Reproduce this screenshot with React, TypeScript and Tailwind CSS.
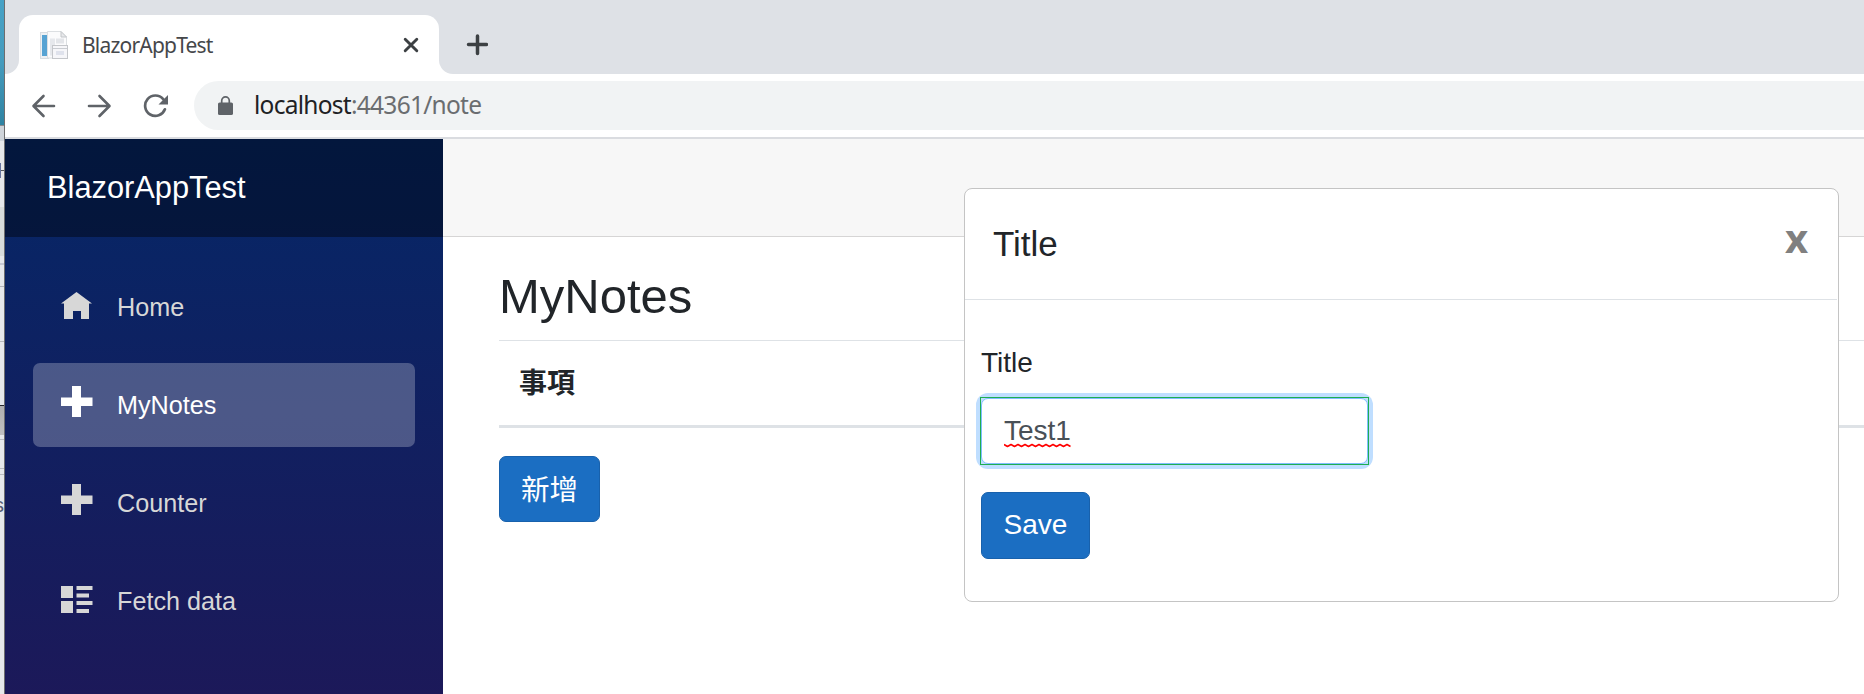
import React from "react";

function Favicon() {
  return (
    <svg width="28" height="28" viewBox="0 0 28 28" className="shrink-0">
      <rect x="0.5" y="1.5" width="8" height="26" fill="#eef1f4" stroke="#d9dde1" />
      <rect x="2" y="4" width="5" height="21" fill="#57a3d3" />
      <path d="M7.5 .5H21L26.500 6V27H7.500Z" fill="#fbfbfc" stroke="#dcdfe2" />
      <rect x="10" y="7.500" width="5" height="17" fill="#e6e8ec" />
      <rect x="16" y="7.500" width="8" height="5" fill="#e3e5e9" />
      <path d="M21 .5V6H26.500Z" fill="#e8e9eb" stroke="#c3c6ca" />
      <rect x="12.500" y="14.500" width="15" height="13" fill="#f6f6f9" stroke="#c4c6ca" />
      <path d="M13 17.500H27" stroke="#c9ccd1" />
      <rect x="16" y="20" width="8" height="4" fill="#dfe2ec" />
    </svg>
  );
}

function DesktopEdge() {
  return (
    <div className="flex h-full w-[5px] shrink-0 flex-col overflow-hidden border-r border-[#6d6d6e] bg-[#e6e8ea]">
      <div className="h-[125px] shrink-0 bg-linear-to-b from-[#47a2c6] via-[#459bbd] to-[#2f83a2]" />
      <div className="h-4 shrink-0 border-t border-[#888c90] bg-[#cfd4da]" />
      <div className="flex h-[59px] shrink-0 items-center">
        <div className="h-[15px] w-px bg-[#66749f]" />
        <div className="h-px w-[3px] bg-[#55585c]" />
      </div>
      <div className="mt-[7px] h-[49px] shrink-0 bg-[#d8dcdb]" />
      <div className="mt-[7px] h-[2px] shrink-0 bg-[#c6c9d2]" />
      <div className="mt-[21px] h-px shrink-0 bg-[#b3b5bb]" />
      <div className="mt-[54px] h-px shrink-0 bg-[#b8babc]" />
      <div className="mt-[63px] h-px shrink-0 bg-[#26272b]" />
      <div className="h-[29px] shrink-0 bg-linear-to-b from-[#b0b0b0] to-[#c0c0c0]" />
      <div className="mt-[4px] h-px shrink-0 bg-[#b9bcc0]" />
      <div className="mt-[28px] h-px shrink-0 bg-[#b9bcc0]" />
      <div className="mt-[5px] h-px shrink-0 bg-[#b9bcc0]" />
      <div className="mt-[16px] flex h-[28px] shrink-0 justify-end overflow-hidden text-[20px] leading-[28px] text-[#555b72]">s</div>
    </div>
  );
}

function TabStrip() {
  return (
    <div className="flex h-[74px] shrink-0 items-end bg-[#dee1e6]">
      <div className="h-[14px] w-[14px] bg-white">
        <div className="h-full w-full rounded-br-[14px] bg-[#dee1e6]" />
      </div>
      <div className="flex h-[59px] w-[420px] items-center rounded-t-[14px] bg-white pl-[21px] pr-[20px]">
        <Favicon />
        <span className="ml-[14px] flex-1 whitespace-nowrap font-['Noto_Sans',sans-serif] text-[21px] leading-7 tracking-[-0.8px] text-[#45474a]">
          BlazorAppTest
        </span>
        <svg width="16" height="16" viewBox="0 0 16 16">
          <path d="M2.200 2.200L13.800 13.800M13.800 2.200L2.200 13.800" stroke="#3c4043" strokeWidth="2.900" strokeLinecap="round" />
        </svg>
      </div>
      <div className="h-[14px] w-[14px] bg-white">
        <div className="h-full w-full rounded-bl-[14px] bg-[#dee1e6]" />
      </div>
      <svg width="22" height="22" viewBox="0 0 22 22" className="mb-[18px] ml-[13px]">
        <path d="M11.500 2V19.500M2.500 10.500H20.500" stroke="#3c4043" strokeWidth="3.500" strokeLinecap="round" />
      </svg>
    </div>
  );
}

function Toolbar() {
  return (
    <div className="flex h-[65px] shrink-0 items-center border-b-2 border-[#dadce0] pl-[26px]">
      <svg width="25" height="24" viewBox="0 0 25 24" fill="none" stroke="#5f6368" strokeWidth="2.600" strokeLinecap="round" strokeLinejoin="round">
        <path d="M23 12H3M12.500 2L2.500 12L12.500 22" />
      </svg>
      <svg width="25" height="24" viewBox="0 0 25 24" fill="none" stroke="#5f6368" strokeWidth="2.600" strokeLinecap="round" strokeLinejoin="round" className="ml-[31px]">
        <path d="M2 12H22M12.500 2L22.500 12L12.500 22" />
      </svg>
      <svg width="26" height="24" viewBox="0 0 26 24" fill="none" className="ml-[31px]">
        <path d="M20.200 5.200A10.200 10.200 0 1 0 21.900 15.300" stroke="#5f6368" strokeWidth="2.700" strokeLinecap="round" />
        <path d="M25 1V10.500H15.500Z" fill="#5f6368" />
      </svg>
      <div className="ml-[25px] flex h-[49px] flex-1 items-center rounded-l-full bg-[#f1f3f4] pl-6">
        <svg width="15" height="19" viewBox="0 0 15 19" fill="none">
          <rect x="0" y="6.500" width="15" height="12.500" rx="1.600" fill="#5f6368" />
          <path d="M3.700 7V4.700a3.800 3.800 0 0 1 7.600 0V7" stroke="#5f6368" strokeWidth="1.700" />
        </svg>
        <span className="-mt-px ml-[21px] font-['Noto_Sans',sans-serif] text-[24.5px] leading-[34px] tracking-[-0.73px] text-[#6a6d70]">
          <span className="text-[#202124]">localhost</span>:44361/note
        </span>
      </div>
    </div>
  );
}

const plus = <path d="M11 0H20V11.500H31.500V20H20V31H11V20H0V11.500H11Z" />;
const home = <path d="M15.500 4L0 15.500H3V31H12V23H20V31H28V15.500H31Z" />;
const list = (
  <path d="M0 4H12V16H0ZM0 19H12V31H0ZM15.500 4H31.500V8H15.500ZM15.500 11.500H28V15.500H15.500ZM15.500 19H31.500V23H15.500ZM15.500 27H28V31H15.500Z" />
);

const items = [
  { label: "Home", icon: home },
  { label: "MyNotes", icon: plus, active: true },
  { label: "Counter", icon: plus },
  { label: "Fetch data", icon: list },
];

function NavItem({ label, icon, active }: { label: string; icon: React.ReactNode; active?: boolean }) {
  return (
    <li
      className={
        active
          ? "flex h-[84px] items-center rounded-[7px] bg-white/25 pl-7 text-white"
          : "flex h-[84px] items-center rounded-[7px] pl-7 text-[#d7d7d7]"
      }
    >
      <svg width="32" height="32" viewBox="0 0 32 32" fill="currentColor" className="-mt-[6px] mr-[24px] shrink-0">
        {icon}
      </svg>
      <span className="text-[25.2px] leading-[84px]">{label}</span>
    </li>
  );
}

function Sidebar() {
  return (
    <aside className="w-[438px] shrink-0 overflow-hidden bg-[linear-gradient(180deg,#052767_0px,#3a0647_1290px)]">
      <div className="flex h-[98px] items-center bg-black/40 pl-[42px] text-[30.8px] leading-[46px] text-white">BlazorAppTest</div>
      <ul className="flex flex-col gap-[14px] px-7 pt-7">
        {items.map((item) => (
          <NavItem key={item.label} {...item} />
        ))}
      </ul>
    </aside>
  );
}

function Main() {
  return (
    <main className="min-w-0 flex-1">
      <div className="h-[98px] border-b border-[#d6d5d5] bg-[#f7f7f7]" />
      <div className="flex flex-col items-start pl-14 pt-[30px]">
        <h3 className="text-[49px] leading-[58px]">MyNotes</h3>
        <div className="mt-[15px] h-[88px] w-full border-b-[3px] border-t border-[#dee2e6] pl-[20px] pt-[22px] font-bold leading-[42px]">
          事項
        </div>
        <button className="mt-[28px] h-[66px] w-[101px] rounded-[7px] border border-[#1861ac] bg-[#1b6ec2] pt-[2px] text-[28.5px] leading-[42px] text-white">
          新增
        </button>
      </div>
    </main>
  );
}

function Modal() {
  return (
    <section className="absolute left-[964px] top-[188px] h-[414px] w-[875px] rounded-[8px] border border-[#c4c4c4] bg-white">
      <header className="mr-px flex h-[111px] items-start justify-between border-b border-[#dee2e6] pl-[28px] pr-[29px]">
        <h5 className="mt-[34px] text-[35px] leading-[42px]">Title</h5>
        <button className="mt-[27px] font-['Open_Sans',sans-serif] text-[40px] font-bold leading-[44px] text-[#808080]">x</button>
      </header>
      <div className="flex flex-col items-start pl-[16px] pt-[42px]">
        <label className="leading-[42px]">Title</label>
        <div className="relative mt-[14px] flex h-[66px] w-[387px] items-center rounded-[7px] border border-[#80bdff] bg-white pl-[22px] text-[#495057] shadow-[0_0_0_5px_#bfdeff]">
          <span className="relative -mt-px leading-[42px]">
            Test1
            <svg width="67" height="5" viewBox="0 0 67 5" className="absolute bottom-[4px] left-0">
              <path
                d="M0 1.500L3.500 3.500L7 1.500L10.500 3.500L14 1.500L17.500 3.500L21 1.500L24.500 3.500L28 1.500L31.500 3.500L35 1.500L38.500 3.500L42 1.500L45.500 3.500L49 1.500L52.500 3.500L56 1.500L59.500 3.500L63 1.500L66.500 3.500"
                fill="none"
                stroke="#ff0000"
                strokeWidth="1.600"
                strokeLinejoin="round"
              />
            </svg>
          </span>
          <div className="absolute -inset-[2px] border border-[#1fae50]" />
        </div>
        <button className="mt-[28px] h-[67px] w-[109px] rounded-[7px] border border-[#1861ac] bg-[#1b6ec2] pb-[2px] leading-[42px] text-white">
          Save
        </button>
      </div>
    </section>
  );
}

export default function App() {
  return (
    <div className="relative flex h-[694px] w-[1864px] overflow-hidden bg-white font-['Liberation_Sans','Noto_Sans_CJK_TC',sans-serif] text-[28px] text-[#212529]">
      <DesktopEdge />
      <div className="flex min-w-0 flex-1 flex-col">
        <TabStrip />
        <Toolbar />
        <div className="flex min-h-0 flex-1">
          <Sidebar />
          <Main />
        </div>
      </div>
      <Modal />
    </div>
  );
}
